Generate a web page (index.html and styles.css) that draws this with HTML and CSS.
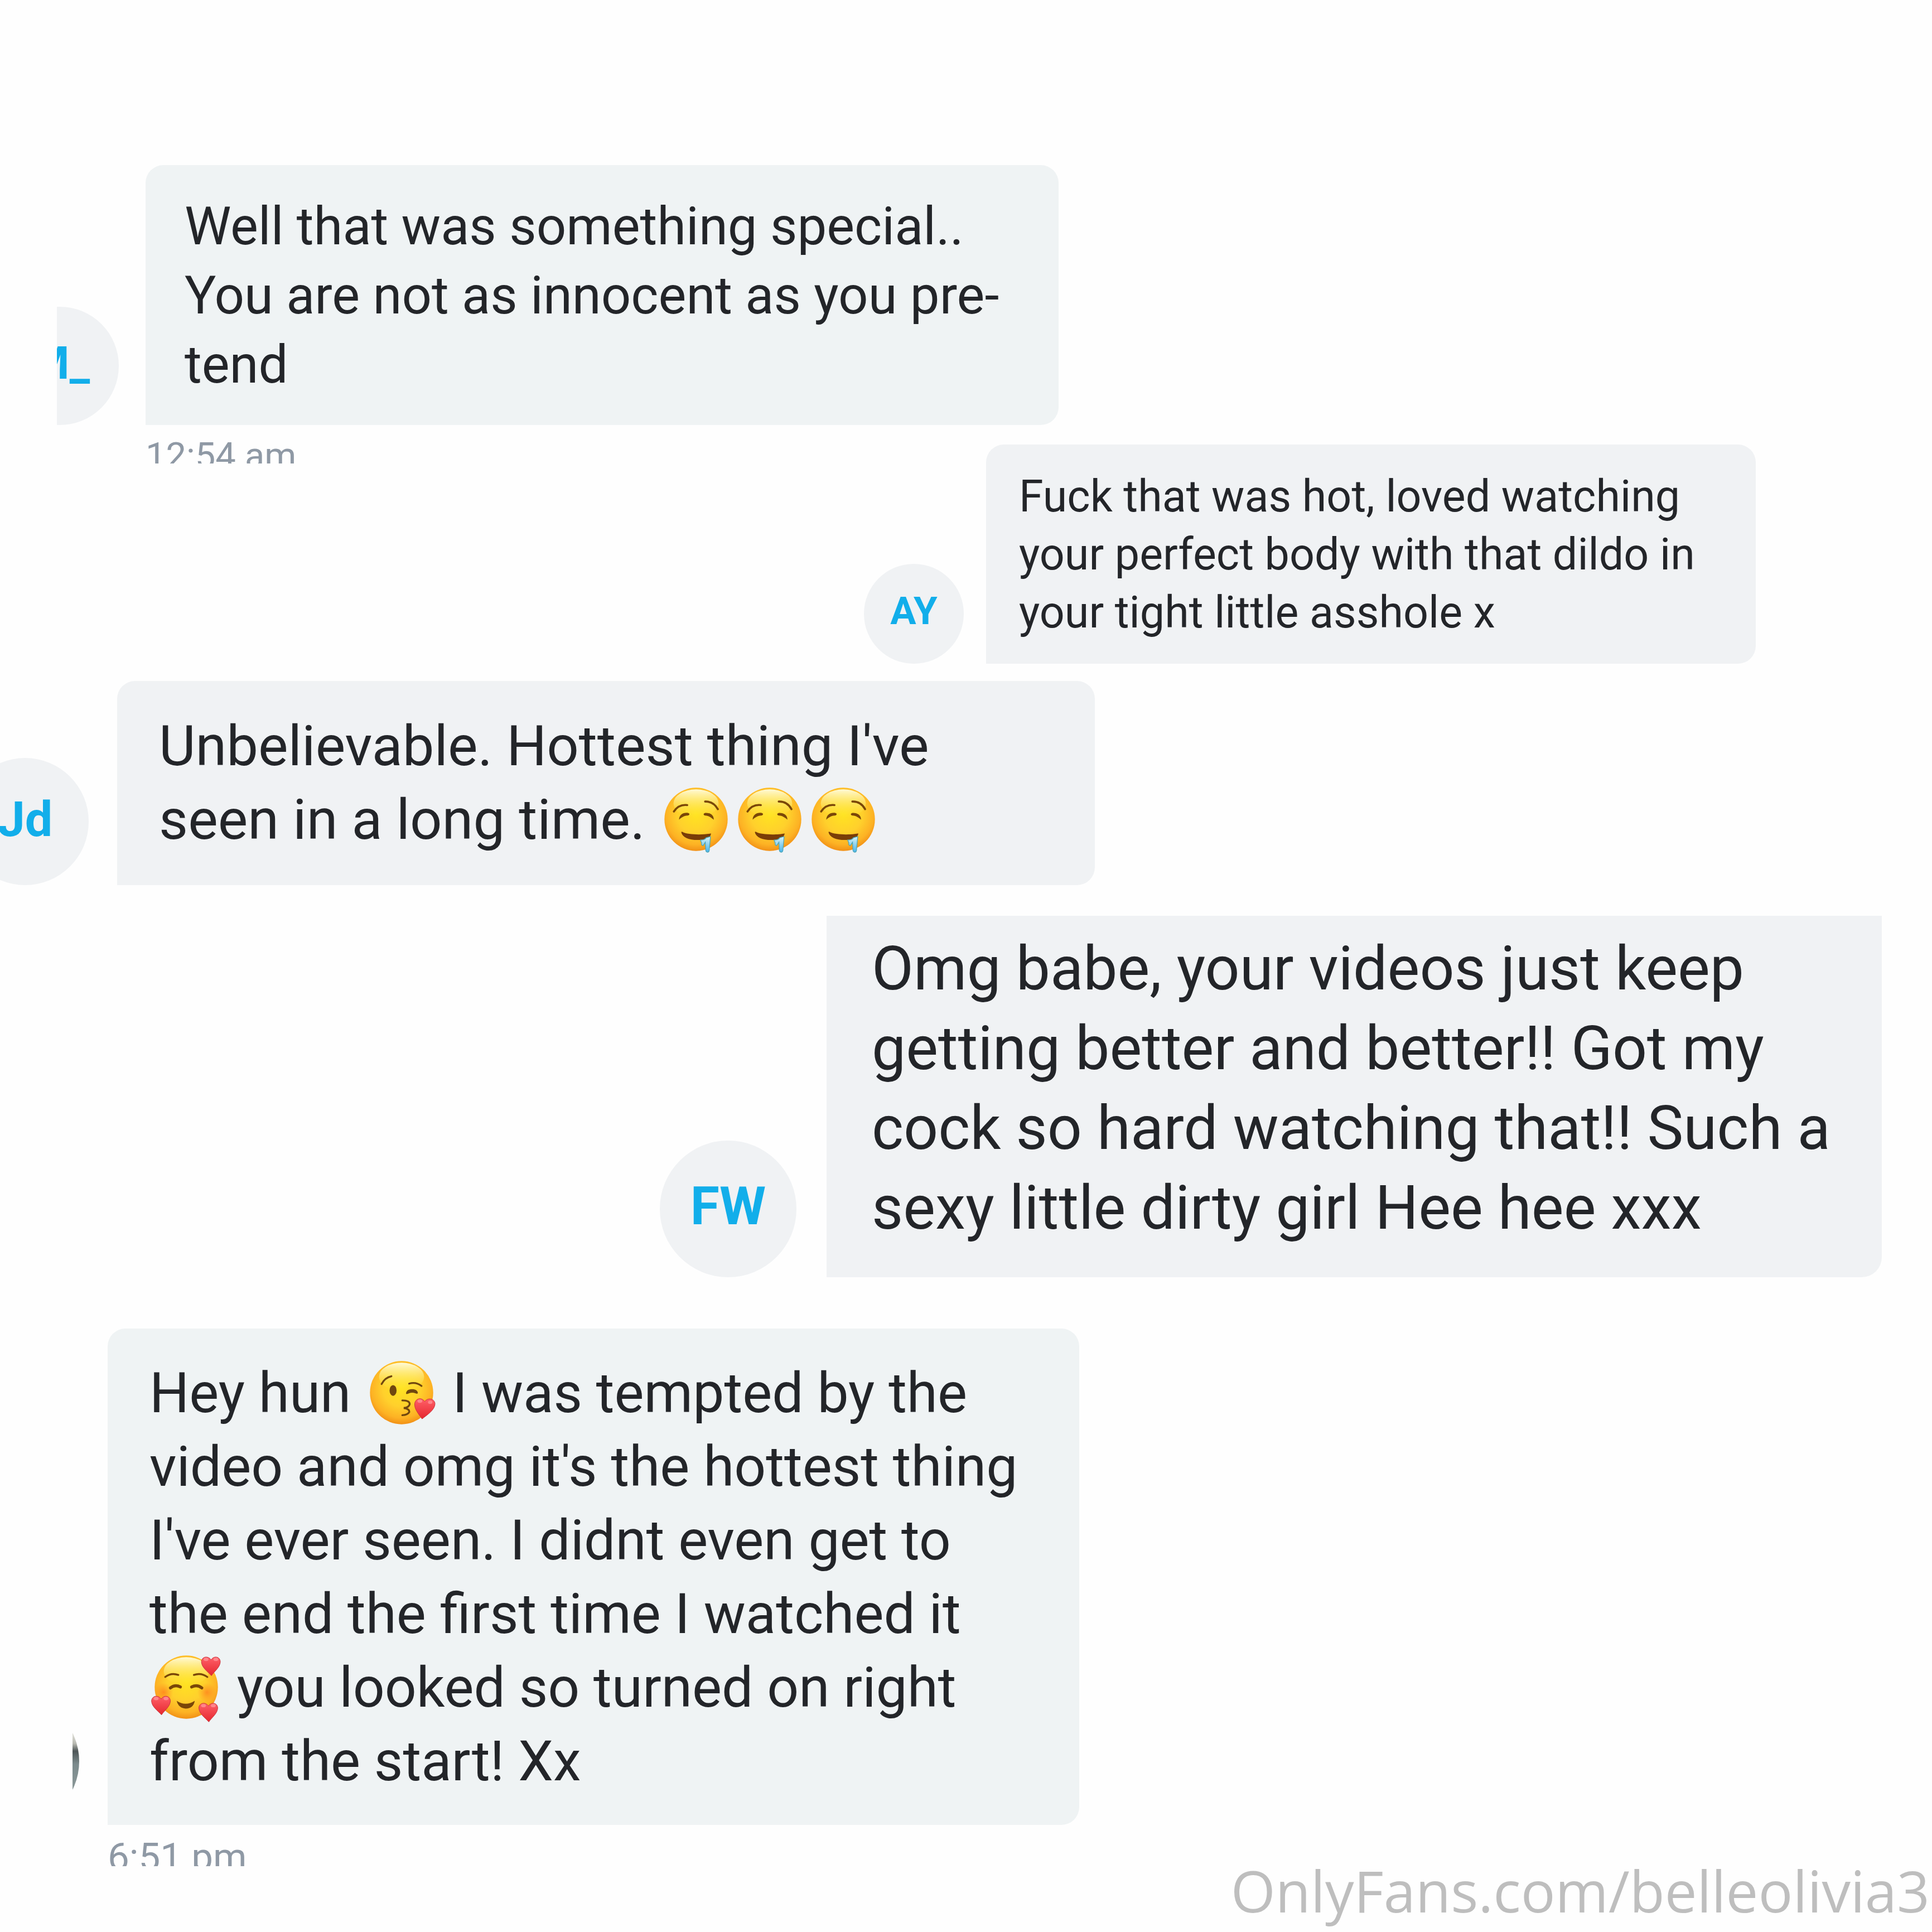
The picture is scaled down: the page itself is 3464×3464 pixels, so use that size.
FILE: index.html
```html
<!DOCTYPE html>
<html lang="en">
<head>
    <meta charset="UTF-8">
    <meta name="viewport" content="width=device-width, initial-scale=1.0">
    <title>Messages</title>
    <link rel="stylesheet" href="styles.css">
</head>
<body>

    <!-- Emoji shapes -->
    <svg class="defs" width="0" height="0" aria-hidden="true">
        <defs>
            <radialGradient id="face" cx="0.5" cy="0.42" r="0.6">
                <stop offset="0" stop-color="#ffe321"/>
                <stop offset="0.5" stop-color="#ffd02c"/>
                <stop offset="0.8" stop-color="#fdb224"/>
                <stop offset="1" stop-color="#ef8a14"/>
            </radialGradient>
            <linearGradient id="shine" x1="0" y1="0" x2="0" y2="1">
                <stop offset="0" stop-color="#fffbd8"/>
                <stop offset="1" stop-color="#ffef40" stop-opacity="0"/>
            </linearGradient>
            <radialGradient id="blush">
                <stop offset="0" stop-color="#ff7a1c" stop-opacity="0.7"/>
                <stop offset="1" stop-color="#ff8a1c" stop-opacity="0"/>
            </radialGradient>
            <linearGradient id="red" x1="0" y1="0" x2="0" y2="1">
                <stop offset="0" stop-color="#ff6068"/>
                <stop offset="1" stop-color="#e5262e"/>
            </linearGradient>
            <linearGradient id="water" x1="0" y1="0" x2="0" y2="1">
                <stop offset="0" stop-color="#d8f2f6"/>
                <stop offset="1" stop-color="#48b4ea"/>
            </linearGradient>
            <g id="head">
                <circle cx="172" cy="172" r="171" fill="url(#face)"/>
                <ellipse cx="172" cy="86" rx="122" ry="76" fill="url(#shine)"/>
            </g>
            <g id="heart">
                <path d="M42 116C20 86 0 62 2 34C4 8 36 -6 56 22C74 -2 110 6 112 34C112 66 70 94 42 116Z" fill="url(#red)" stroke="#c9343c" stroke-width="3"/>
                <ellipse cx="30" cy="20" rx="13" ry="9" fill="#ff9a9e" opacity="0.7"/>
                <ellipse cx="86" cy="26" rx="12" ry="9" fill="#ff9a9e" opacity="0.7"/>
            </g>
            <g id="heart-up">
                <path d="M56 106C34 82 4 62 2 32C2 2 38 -4 54 20C70 -4 104 2 104 32C102 62 72 82 56 106Z" fill="url(#red)" stroke="#c9343c" stroke-width="3"/>
                <ellipse cx="27" cy="18" rx="13" ry="9" fill="#ff9a9e" opacity="0.7"/>
                <ellipse cx="80" cy="18" rx="13" ry="9" fill="#ff9a9e" opacity="0.7"/>
            </g>
            <g id="drool">
                <use href="#head"/>
                <g fill="none" stroke="#7a4708" stroke-width="11" stroke-linecap="round">
                    <path d="M52 130Q78 90 124 95"/>
                    <path d="M221 76Q266 74 290 117"/>
                </g>
                <path d="M80 174C80 148 102 134 128 137C140 140 138 150 126 152C104 154 94 162 80 174Z" fill="#7a4708"/>
                <path d="M268 174C268 148 248 136 222 137C209 140 211 150 222 152C244 154 252 162 268 174Z" fill="#7a4708"/>
                <path d="M92 242C98 270 134 284 180 284C222 284 252 272 253 248C220 256 130 258 98 240Q92 238 92 242Z" fill="#7a3d08"/>
                <path d="M250 266L244 332Q244 350 235 350Q224 350 224 334L222 296L210 314Q200 314 202 300L196 284Q220 284 226 272Q238 268 250 266Z" fill="url(#water)" stroke="#4ea6b8" stroke-width="4"/>
            </g>
            <g id="kiss">
                <use href="#head"/>
                <g fill="none" stroke="#70470f" stroke-width="10" stroke-linecap="round">
                    <path d="M64 125Q82 90 117 83"/>
                    <path d="M213 123Q250 112 280 136"/>
                    <path d="M176 214Q216 214 216 234Q212 252 184 255Q216 260 214 276Q206 292 176 294"/>
                </g>
                <ellipse cx="126" cy="160" rx="19" ry="29" fill="#70470f"/>
                <path d="M196 176C198 156 216 153 230 153C246 153 260 160 260 174Q258 180 248 176Q226 168 208 177Q196 182 196 176Z" fill="#70470f"/>
                <use href="#heart" x="241" y="198"/>
            </g>
            <g id="love">
                <use href="#head"/>
                <circle cx="50" cy="200" r="52" fill="url(#blush)"/>
                <circle cx="284" cy="200" r="52" fill="url(#blush)"/>
                <g fill="none" stroke="#7a4708" stroke-linecap="round">
                    <path d="M58 117Q90 92 129 106" stroke-width="10"/>
                    <path d="M213 106Q252 92 286 117" stroke-width="10"/>
                    <path d="M86 176Q112 156 140 171" stroke-width="16"/>
                    <path d="M201 171Q230 156 256 176" stroke-width="16"/>
                </g>
                <path d="M120 246Q168 278 218 246Q210 288 169 288Q130 286 120 246Z" fill="#7a4708"/>
                <use href="#heart-up" x="252" y="4"/>
                <use href="#heart-up" x="-18" y="216"/>
                <use href="#heart-up" x="238" y="254"/>
            </g>
        </defs>
    </svg>

    <main class="chat">
        <article class="message first">
            <div class="row">
                <div class="avatar">M_</div>
                <p class="bubble">Well that was something special..<br>You are not as innocent as you pre-<br>tend</p>
            </div>
            <time class="time">12:54 am</time>
        </article>

        <article class="message second">
            <div class="row">
                <div class="avatar">AY</div>
                <p class="bubble">Fuck that was hot, loved watching<br>your perfect body with that dildo in<br>your tight little asshole x</p>
            </div>
        </article>

        <article class="message third">
            <div class="row">
                <div class="avatar">Jd</div>
                <p class="bubble">Unbelievable. Hottest thing I've<br>seen in a long time. <svg class="emoji" viewBox="0 0 344 344" role="img" aria-label="drooling face"><use href="#drool"/></svg><svg class="emoji" viewBox="0 0 344 344" role="img" aria-label="drooling face"><use href="#drool"/></svg><svg class="emoji" viewBox="0 0 344 344" role="img" aria-label="drooling face"><use href="#drool"/></svg></p>
            </div>
        </article>

        <article class="message fourth">
            <div class="row">
                <div class="avatar">FW</div>
                <p class="bubble">Omg babe, your videos just keep<br>getting better and better!! Got my<br>cock so hard watching that!! Such a<br>sexy little dirty girl Hee hee xxx</p>
            </div>
        </article>

        <article class="message fifth">
            <div class="row">
                <div class="avatar photo"></div>
                <p class="bubble">Hey hun <svg class="emoji" viewBox="0 0 344 344" role="img" aria-label="face blowing a kiss"><use href="#kiss"/></svg> I was tempted by the<br>video and omg it's the hottest thing<br>I've ever seen. I didnt even get to<br>the end the first time I watched it<br><svg class="emoji" viewBox="0 0 344 344" role="img" aria-label="smiling face with hearts"><use href="#love"/></svg> you looked so turned on right<br>from the start! Xx</p>
            </div>
            <time class="time">6:51 pm</time>
        </article>
    </main>

    <footer class="watermark">OnlyFans.com/belleolivia3</footer>

</body>
</html>
```

FILE: styles.css
```css
* {
    box-sizing: border-box;
}
body {
    margin: 0;
    min-height: 100vh;
    display: flex;
    flex-direction: column;
    overflow-x: hidden;
    background-color: #fefefe;
    color: #232529;
    font-family: Roboto, sans-serif;
}
.defs {
    position: absolute;
}
.chat {
    padding-top: 296px;
}
.message {
    overflow: hidden;
}
.row {
    display: flex;
    align-items: flex-end;
}
.avatar {
    flex: none;
    display: flex;
    align-items: center;
    justify-content: center;
    padding-bottom: 10px;
    border-radius: 50%;
    background-color: #f0f2f4;
    color: #12aeea;
    font-weight: bold;
}
.bubble {
    flex: 1;
    margin: 0;
    background-color: #f0f2f4;
    border-radius: 32px 32px 32px 0;
    white-space: nowrap;
}
.time {
    display: block;
    overflow: hidden;
    color: #8f99a5;
}
.emoji {
    width: 114px;
    height: 114px;
    margin: 0 9px;
    vertical-align: -22px;
    overflow: visible;
}

/* 12:54 am */
.first {
    margin: 0 1566px 0 102px;
}
.first .row {
    gap: 48px;
}
.first .avatar {
    width: 212px;
    height: 212px;
    margin-left: -101px;
    font-size: 82px;
}
.first .bubble {
    padding: 48px 70px 46px;
    background-color: #eff3f4;
    font-size: 94px;
    line-height: 124px;
}
.first .time {
    height: 69px;
    margin-left: 159px;
    font-size: 65px;
    line-height: 110px;
}

/* AY */
.second {
    margin: -34px 316px 0 1549px;
}
.second .row {
    gap: 40px;
}
.second .avatar {
    width: 179px;
    height: 179px;
    font-size: 69px;
}
.second .bubble {
    padding: 41px 59px 40px;
    font-size: 79px;
    line-height: 104px;
}

/* Jd */
.third {
    margin: 31px 1501px 0 -69px;
}
.third .row {
    gap: 51px;
}
.third .avatar {
    width: 228px;
    height: 228px;
    font-size: 88px;
}
.third .bubble {
    padding: 51px 75px;
    font-size: 101px;
    line-height: 132px;
}

/* FW */
.fourth {
    margin: 55px 90px 0 1183px;
}
.fourth .row {
    gap: 54px;
}
.fourth .avatar {
    width: 245px;
    height: 245px;
    font-size: 95px;
}
.fourth .bubble {
    padding: 24px 81px 52px;
    border-radius: 0 0 36px 0;
    font-size: 109px;
    line-height: 143px;
}

/* 6:51 pm */
.fifth {
    margin: 92px 1529px 0 130px;
}
.fifth .row {
    gap: 51px;
}
.fifth .avatar {
    width: 228px;
    height: 228px;
    margin-left: -216px;
}
.fifth .photo {
    background: linear-gradient(#d8d8d0 30%, #b9bab2 36%, #4d5556 42%, #7b8a8c 52%, #8b9898 72%);
}
.fifth .bubble {
    padding: 50px 75px 48px;
    background-color: #eff3f4;
    font-size: 100px;
    line-height: 132px;
}
.fifth .time {
    height: 74px;
    margin-left: 63px;
    font-size: 69px;
    line-height: 116px;
}

.watermark {
    margin-top: auto;
    padding: 0 4px 32px 0;
    color: #bebebe;
    font-family: "Open Sans", sans-serif;
    font-size: 103px;
    line-height: 86px;
    text-align: right;
}
```
